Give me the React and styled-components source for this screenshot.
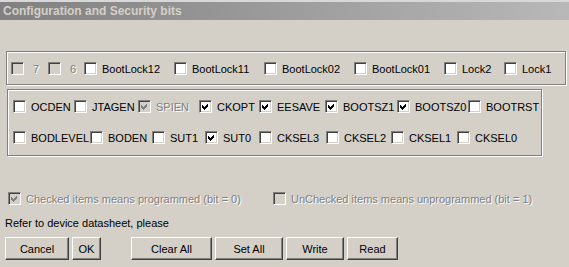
import React from "react";
import styled, { createGlobalStyle } from "styled-components";

const GlobalStyle = createGlobalStyle`
  body {
    margin: 0;
    background: #d4d0c8;
    font-family: "Liberation Sans", Arial, sans-serif;
    font-size: 11px;
  }
`;

const lockBits = [
  { label: "7", w: 37, disabled: true, pad: 4 },
  { label: "6", w: 36, disabled: true, pad: 4 },
  { label: "BootLock12", w: 90 },
  { label: "BootLock11", w: 90 },
  { label: "BootLock02", w: 90 },
  { label: "BootLock01", w: 90 },
  { label: "Lock2", w: 60 },
  { label: "Lock1", w: 55 },
];

const fuseRow1 = [
  { label: "OCDEN", w: 61 },
  { label: "JTAGEN", w: 64 },
  { label: "SPIEN", w: 61, checked: true, disabled: true },
  { label: "CKOPT", w: 60, checked: true },
  { label: "EESAVE", w: 66, checked: true },
  { label: "BOOTSZ1", w: 72, checked: true },
  { label: "BOOTSZ0", w: 71, checked: true },
  { label: "BOOTRST", w: 70 },
];

const fuseRow2 = [
  { label: "BODLEVEL", w: 77 },
  { label: "BODEN", w: 62 },
  { label: "SUT1", w: 53 },
  { label: "SUT0", w: 54, checked: true },
  { label: "CKSEL3", w: 67 },
  { label: "CKSEL2", w: 65 },
  { label: "CKSEL1", w: 66 },
  { label: "CKSEL0", w: 70 },
];

// classic 13x13 sunken checkbox with its label
function Check({ label, checked, disabled, w, pad }) {
  return (
    <CheckItem $w={w}>
      <Box $disabled={disabled}>
        {checked && (
          <svg width="13" height="13" viewBox="0 0 13 13" shapeRendering="crispEdges">
            <polygon
              points="3,5 5,7 9,3 9,6 5,10 3,8"
              fill={disabled ? "#808080" : "#000"}
            />
          </svg>
        )}
      </Box>
      <CheckText $disabled={disabled} $pad={pad}>
        {label}
      </CheckText>
    </CheckItem>
  );
}

function App() {
  return (
    <Dialog>
      <GlobalStyle />
      <TitleBar>Configuration and Security bits</TitleBar>

      <LockGroup>
        <BitRow>
          {lockBits.map((b) => (
            <Check key={b.label} {...b} />
          ))}
        </BitRow>
      </LockGroup>

      <FuseGroup>
        <BitRow>
          {fuseRow1.map((b) => (
            <Check key={b.label} {...b} />
          ))}
        </BitRow>
        <BitRow>
          {fuseRow2.map((b) => (
            <Check key={b.label} {...b} />
          ))}
        </BitRow>
      </FuseGroup>

      <LegendRow>
        <Check label="Checked items means programmed (bit = 0)" w={265} checked disabled />
        <Check label="UnChecked items means unprogrammed (bit = 1)" w={270} disabled />
      </LegendRow>

      <Hint>Refer to device datasheet, please</Hint>

      <ButtonBar>
        <Button $w={64}>Cancel</Button>
        <Button $w={29}>OK</Button>
        <Button $w={81} $gap={27}>Clear All</Button>
        <Button $w={68}>Set All</Button>
        <Button $w={58}>Write</Button>
        <Button $w={51}>Read</Button>
      </ButtonBar>
    </Dialog>
  );
}

export default App;

const Dialog = styled.div`
  width: 569px;
  height: 267px;
  background: #d4d0c8;
  overflow: hidden;
  color: #000;
`;

const TitleBar = styled.div`
  height: 18px;
  border-top: 2px solid #d8d8d8;
  padding-left: 3px;
  display: flex;
  align-items: center;
  background: linear-gradient(to right, #808080, #b8b8b8);
  color: #d4d0c8;
  font-weight: bold;
  font-size: 12px;
`;

const GroupBox = styled.div`
  box-sizing: border-box;
  border: 1px solid #808080;
  box-shadow: inset 1px 1px 0 #fff, 1px 1px 0 #fff;
`;

const LockGroup = styled(GroupBox)`
  margin: 31px 0 0 6px;
  width: 560px;
  height: 34px;
  padding: 8px 0 0 4px;
`;

const FuseGroup = styled(GroupBox)`
  margin: 4px 0 0 7px;
  width: 535px;
  height: 67px;
  padding: 8px 0 0 5px;
  display: flex;
  flex-direction: column;
  gap: 14px;
`;

const BitRow = styled.div`
  display: flex;
  height: 17px;
  align-items: center;
`;

const CheckItem = styled.label`
  display: flex;
  align-items: center;
  gap: 5px;
  width: ${(p) => p.$w}px;
  flex: none;
  white-space: nowrap;
`;

const Box = styled.span`
  position: relative;
  box-sizing: border-box;
  width: 13px;
  height: 13px;
  flex: none;
  border: 1px solid;
  border-color: #808080 #fff #fff #808080;
  box-shadow: inset 1px 1px 0 #404040, inset -1px -1px 0 #d4d0c8;
  background: ${(p) => (p.$disabled ? "#d4d0c8" : "#fff")};

  svg {
    position: absolute;
    left: -1px;
    top: -1px;
  }
`;

const CheckText = styled.span`
  padding-left: ${(p) => p.$pad || 0}px;
  color: ${(p) => (p.$disabled ? "#808080" : "#000")};
  text-shadow: ${(p) => (p.$disabled ? "1px 1px 0 #fff" : "none")};
`;

const LegendRow = styled.div`
  display: flex;
  height: 17px;
  align-items: center;
  margin: 34px 0 0 8px;
`;

const Hint = styled.div`
  margin: 10px 0 0 5px;
  height: 13px;
  line-height: 13px;
`;

const ButtonBar = styled.div`
  display: flex;
  gap: 3px;
  margin: 7px 0 0 5px;
`;

const Button = styled.button`
  box-sizing: border-box;
  width: ${(p) => p.$w}px;
  height: 23px;
  margin-left: ${(p) => p.$gap || 0}px;
  padding: 0;
  font-family: "Liberation Sans", Arial, sans-serif;
  font-size: 11px;
  color: #000;
  background: #d4d0c8;
  border: 1px solid;
  border-color: #fff #404040 #404040 #fff;
  box-shadow: inset -1px -1px 0 #808080;
  border-radius: 0;
`;
